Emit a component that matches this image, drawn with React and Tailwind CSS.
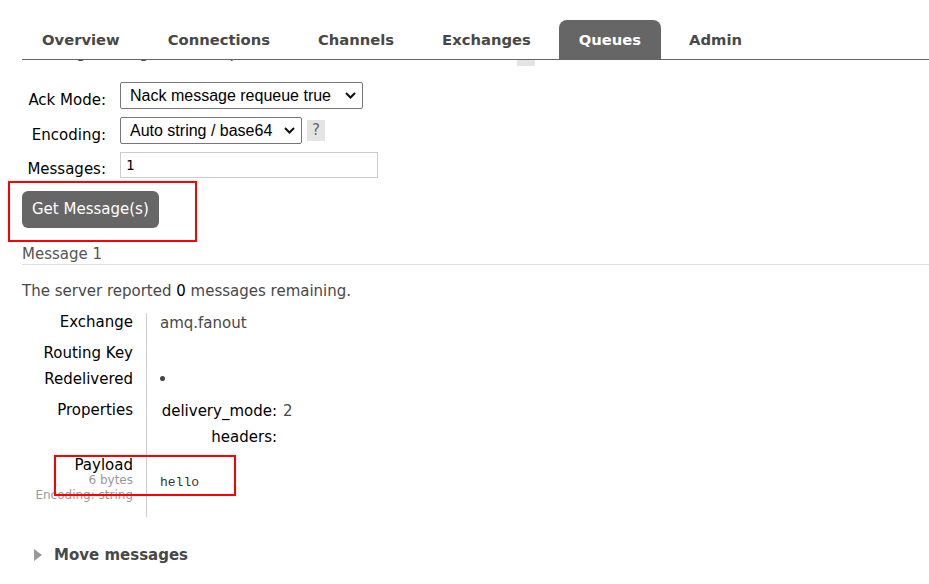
import React from "react";

const tabs = ["Overview", "Connections", "Channels", "Exchanges", "Queues", "Admin"];

const Chevron = () => (
  <svg width="11" height="7" viewBox="0 0 11 7" className="shrink-0">
    <path d="M1 1l4.5 4.5L10 1" fill="none" stroke="#111" strokeWidth="2" />
  </svg>
);

const Select = ({ value, width }) => (
  <div
    className={`flex items-center justify-between h-[27px] border border-[#767676] rounded-[2px] bg-white pl-[9px] pr-[6px] text-[16px] text-black ${width}`}
    style={{ fontFamily: '"Liberation Sans", Arial, sans-serif' }}
  >
    <span>{value}</span>
    <Chevron />
  </div>
);

export default function App() {
  return (
    <div
      className="relative w-[929px] h-[584px] overflow-hidden bg-white text-[15px] text-[#484848]"
      style={{ fontFamily: '"DejaVu Sans", Verdana, sans-serif' }}
    >
      {/* nav */}
      <div className="pt-[20px] pl-[22px]">
        <div className="flex border-b border-[#666] h-[40px]">
          {tabs.map((t) => (
            <div
              key={t}
              className={
                t === "Queues"
                  ? "mr-2 px-5 h-[39px] pt-[1px] flex items-center bg-[#666] text-white text-[14.75px] font-bold rounded-t-[8px]"
                  : "mr-2 px-5 h-[39px] pt-[1px] flex items-center text-[#484848] text-[14.75px] font-bold"
              }
            >
              {t}
            </div>
          ))}
        </div>
      </div>

      {/* row cut off under the header */}
      <div className="relative h-[7px] overflow-hidden">
        <div className="absolute left-[30px] -top-[16px] text-[15px] leading-[18px] text-[#484848] whitespace-nowrap">
          Getting messages from a queue is a destructive action.
        </div>
        <div className="absolute left-[517px] -top-[14px] w-[18px] h-[20px] bg-[#e4e4e4]" />
      </div>

      {/* form */}
      <div className="mt-[15px] pl-[22px] flex flex-col gap-[8px]">
        <div className="flex items-start">
          <div className="w-[84px] h-[27px] text-right pt-[10px] leading-[17px] text-black">Ack Mode:</div>
          <div className="ml-[14px]">
            <Select value="Nack message requeue true" width="w-[243px]" />
          </div>
        </div>
        <div className="flex items-start">
          <div className="w-[84px] h-[27px] text-right pt-[10px] leading-[17px] text-black">Encoding:</div>
          <div className="ml-[14px] flex items-center gap-[5px]">
            <Select value="Auto string / base64" width="w-[182px]" />
            <div className="w-[18px] h-[21px] bg-[#e4e4e4] flex items-center justify-center text-[#666] text-[15px]">?</div>
          </div>
        </div>
        <div className="flex items-start">
          <div className="w-[84px] h-[26px] text-right pt-[9px] leading-[17px] text-black">Messages:</div>
          <div
            className="ml-[14px] w-[258px] h-[26px] border border-[#cccccc] pl-[5px] flex items-center text-[14px] text-black"
            style={{ fontFamily: '"DejaVu Sans Mono", monospace' }}
          >
            1
          </div>
        </div>
      </div>

      <div className="mt-[13px] pl-[22px]">
        <div className="inline-flex items-center h-[37px] px-[10px] bg-[#666] text-white rounded-[6px]">
          Get Message(s)
        </div>
      </div>

      {/* Message 1 */}
      <div className="mt-[16px] ml-[22px] border-b border-[#e0e0e0] pt-[1px] pb-[1px] leading-[18px] text-[#555]">
        Message 1
      </div>
      <div className="mt-[17px] ml-[22px] leading-[18px]">
        The server reported <span className="text-black">0</span> messages remaining.
      </div>

      {/* details table */}
      <div className="mt-[13px] ml-[22px] grid grid-cols-[124px_1fr] w-[400px] leading-[18px]">
        <div className="pr-[13px] text-right text-black h-[25px]">Exchange</div>
        <div className="border-l border-[#cccccc] pl-[13px] pt-[1px]">amq.fanout</div>

        <div className="pr-[13px] text-right text-black pt-[6px] h-[26px]">Routing Key</div>
        <div className="border-l border-[#cccccc] pl-[13px]" />

        <div className="pr-[13px] text-right text-black pt-[6px] h-[26px]">Redelivered</div>
        <div className="border-l border-[#cccccc] pl-[13px] pt-[12px]">
          <div className="w-[5px] h-[5px] rounded-full bg-[#444]" />
        </div>

        <div className="pr-[13px] text-right text-black pt-[11px]">Properties</div>
        <div className="border-l border-[#cccccc] pl-[13px] pt-[12px] pb-[4px] text-black">
          <div className="grid grid-cols-[117px_auto] gap-x-[6px] gap-y-[8px] w-fit">
            <div className="text-right">delivery_mode:</div>
            <div className="text-[#484848]">2</div>
            <div className="text-right">headers:</div>
            <div />
          </div>
        </div>

        <div className="pr-[13px] text-right pt-[6px] pb-[14px]">
          <div className="text-black">Payload</div>
          <div className="text-[12px] leading-[15px] text-[#999] -mt-[1px]">6 bytes</div>
          <div className="text-[12px] leading-[15px] text-[#999]">Encoding: string</div>
        </div>
        <div
          className="border-l border-[#cccccc] pl-[13px] pt-[24px] text-[13px] text-[#333]"
          style={{ fontFamily: '"Liberation Mono", "DejaVu Sans Mono", monospace' }}
        >
          hello
        </div>
      </div>

      {/* Move messages */}
      <div className="mt-[27px] ml-[34px] flex items-center gap-[12px]">
        <svg width="8" height="12" viewBox="0 0 8 12">
          <path d="M0 0L8 6L0 12Z" fill="#999" />
        </svg>
        <span className="font-bold text-[#484848]">Move messages</span>
      </div>

      {/* annotations */}
      <div className="absolute left-[8px] top-[181px] w-[189px] h-[61px] border-2 border-[#ff0000]" />
      <div className="absolute left-[54px] top-[455px] w-[182px] h-[41px] border-2 border-[#ff0000]" />
    </div>
  );
}
